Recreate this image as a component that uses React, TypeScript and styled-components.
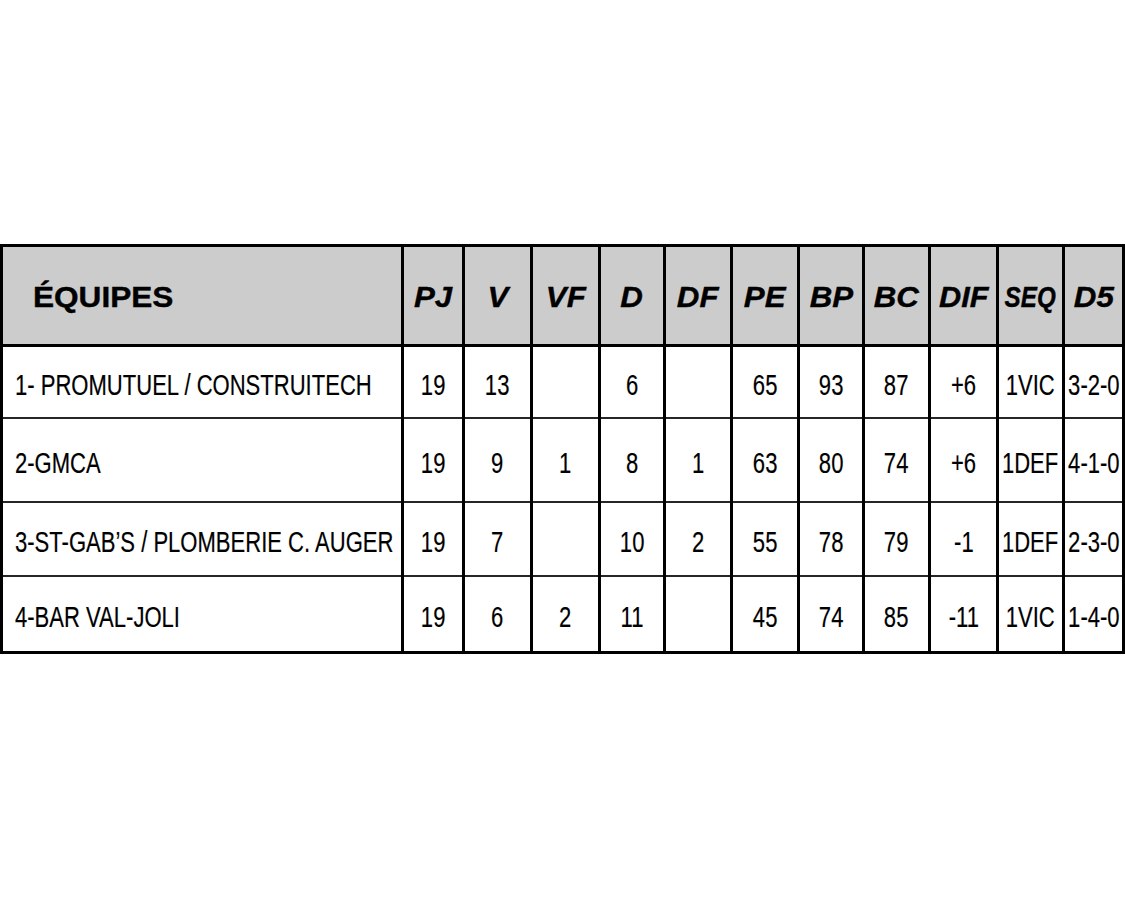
import styled, { createGlobalStyle } from 'styled-components';

const GlobalStyle = createGlobalStyle`
  html, body {
    margin: 0;
    padding: 0;
    background: #ffffff;
  }
  body {
    font-family: "Liberation Sans", Arial, sans-serif;
    color: #000000;
  }
`;

const Page = styled.div`
  width: 1125px;
  height: 900px;
  padding-top: 244px;
  box-sizing: border-box;
`;

const Table = styled.table`
  border-collapse: collapse;
  table-layout: fixed;
  width: 1124px;
  border: 3px solid #000;
`;

const HeadCell = styled.th`
  height: 94px;
  padding: 3px 0 0 0;
  background: #cccccc;
  border-left: 3px solid #000;
  border-right: 3px solid #000;
  border-bottom: 3px solid #000;
  vertical-align: middle;
  font-size: 29.5px;
  font-weight: bold;
  -webkit-text-stroke: 0.4px #000;
`;

const Cell = styled.td`
  padding: 7px 0 0 0;
  border-left: 3px solid #000;
  border-right: 3px solid #000;
  border-bottom: 2px solid #262626;
  vertical-align: middle;
  font-size: 29px;
  -webkit-text-stroke: 0.2px #000;
`;

// flex keeps overflowing labels centred on both sides
const Inner = styled.div<{ $left?: boolean; $pad?: number }>`
  display: flex;
  justify-content: ${({ $left }) => ($left ? 'flex-start' : 'center')};
  padding-left: ${({ $pad }) => $pad ?? 0}px;
  white-space: nowrap;
`;

const Row = styled.tr<{ $h: number }>`
  height: ${({ $h }) => $h}px;
`;

const Label = styled.span<{ $x: number; $left?: boolean; $italic?: boolean }>`
  display: inline-block;
  flex-shrink: 0;
  font-style: ${({ $italic }) => ($italic ? 'italic' : 'normal')};
  transform: scaleX(${({ $x }) => $x});
  transform-origin: ${({ $left }) => ($left ? 'left center' : 'center center')};
`;

const widths = [401, 61, 68, 68, 65, 67, 67, 65, 66, 68, 66, 60];
const headers: [string, number][] = [
  ['PJ', 1.06],
  ['V', 1.06],
  ['VF', 1.06],
  ['D', 1.06],
  ['DF', 1.06],
  ['PE', 1.06],
  ['BP', 1.06],
  ['BC', 1.06],
  ['DIF', 1.04],
  ['SEQ', 0.82],
  ['D5', 1.06],
];

const rows: { h: number; cells: string[] }[] = [
  { h: 72, cells: ['1- PROMUTUEL / CONSTRUITECH', '19', '13', '', '6', '', '65', '93', '87', '+6', '1VIC', '3-2-0'] },
  { h: 84, cells: ['2-GMCA', '19', '9', '1', '8', '1', '63', '80', '74', '+6', '1DEF', '4-1-0'] },
  { h: 74, cells: ['3-ST-GAB\u2019S / PLOMBERIE C. AUGER', '19', '7', '', '10', '2', '55', '78', '79', '-1', '1DEF', '2-3-0'] },
  { h: 77, cells: ['4-BAR VAL-JOLI', '19', '6', '2', '11', '', '45', '74', '85', '-11', '1VIC', '1-4-0'] },
];

export default function App() {
  return (
    <Page>
      <GlobalStyle />
      <Table>
        <colgroup>
          {widths.map((w, i) => (
            <col key={i} style={{ width: w }} />
          ))}
        </colgroup>
        <thead>
          <tr>
            <HeadCell>
              <Inner $left $pad={30}>
                <Label $x={1.07} $left>ÉQUIPES</Label>
              </Inner>
            </HeadCell>
            {headers.map(([h, x]) => (
              <HeadCell key={h}>
                <Inner>
                  <Label $x={x} $italic>{h}</Label>
                </Inner>
              </HeadCell>
            ))}
          </tr>
        </thead>
        <tbody>
          {rows.map((r, ri) => (
            <Row key={ri} $h={r.h}>
              {r.cells.map((c, ci) => (
                <Cell key={ci}>
                  <Inner $left={ci === 0} $pad={ci === 0 ? 12 : 0}>
                    {c && (
                      <Label $x={0.76} $left={ci === 0}>
                        {c}
                      </Label>
                    )}
                  </Inner>
                </Cell>
              ))}
            </Row>
          ))}
        </tbody>
      </Table>
    </Page>
  );
}
